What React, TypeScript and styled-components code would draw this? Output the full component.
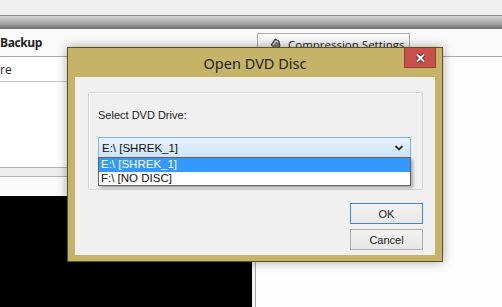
import styled, { createGlobalStyle } from "styled-components";

const drives = ["E:\\ [SHREK_1]", "F:\\ [NO DISC]"];

const App = () => {
  return (
    <Page>
      <GlobalStyle />
      <TopStrip />
      <Band />
      <Header>
        <HeaderTitleCell>
          <HeaderTitle>Backup</HeaderTitle>
        </HeaderTitleCell>
        <ToolButton>
          <svg width="15" height="14" viewBox="0 0 15 14">
            <path d="M3 8 L7 2 L11 4 L12 9 L8 12 Z" fill="#7d7d7d" stroke="#3c3c3c" strokeWidth="1" />
            <path d="M5 8 L8 4 L10 5" fill="none" stroke="#d8d8d8" strokeWidth="1.2" />
          </svg>
          Compression Settings
        </ToolButton>
      </Header>
      <Body>
        <LeftPane>
          <Row>re</Row>
          <Spacer />
          <SplitBar />
          <Gap />
          <Preview />
        </LeftPane>
        <Divider />
        <RightPane />
      </Body>

      <Dialog>
        <TitleBar>
          <Title>Open DVD Disc</Title>
          <CloseButton>
            <svg width="11" height="10" viewBox="0 0 11 10">
              <path d="M2 1.5 L9 8.5 M9 1.5 L2 8.5" stroke="#4a2020" strokeWidth="3.6" />
              <path d="M2 1.5 L9 8.5 M9 1.5 L2 8.5" stroke="#ffffff" strokeWidth="2" />
            </svg>
          </CloseButton>
        </TitleBar>
        <Client>
          <GroupBox>
            <Label>Select DVD Drive:</Label>
            <ComboWrap>
              <Combo>
                <span>{drives[0]}</span>
                <svg width="10" height="6" viewBox="0 0 10 6">
                  <path d="M1.5 1 L5 4.5 L8.5 1" fill="none" stroke="#333" strokeWidth="1.8" />
                </svg>
              </Combo>
              <DropList>
                {drives.map((d, i) => (
                  <Option key={d} $selected={i === 0}>
                    {d}
                  </Option>
                ))}
              </DropList>
            </ComboWrap>
          </GroupBox>
          <ButtonColumn>
            <DialogButton $primary>OK</DialogButton>
            <DialogButton>Cancel</DialogButton>
          </ButtonColumn>
        </Client>
      </Dialog>
    </Page>
  );
};

const GlobalStyle = createGlobalStyle`
  html, body {
    margin: 0;
    padding: 0;
  }
  body {
    width: 502px;
    height: 307px;
    overflow: hidden;
    background: #f0f0f0;
    font-family: "Liberation Sans", Arial, sans-serif;
  }
`;

const Page = styled.div`
  position: relative;
  width: 502px;
  height: 307px;
  display: flex;
  flex-direction: column;
  overflow: hidden;
`;

const TopStrip = styled.div`
  height: 15px;
  background: #efefef;
  border-bottom: 1px solid #8f8f8f;
`;

const Band = styled.div`
  height: 13px;
  background: linear-gradient(#d6d6d6, #a2a2a2 60%, #6c6c6c);
`;

const Header = styled.div`
  height: 27px;
  display: flex;
  background: #fafafa;
  border-bottom: 1px solid #a8a8a8;
`;

const HeaderTitleCell = styled.div`
  width: 257px;
  display: flex;
  align-items: center;
`;

const HeaderTitle = styled.span`
  font-family: "Open Sans", sans-serif;
  font-weight: 700;
  font-size: 12px;
  letter-spacing: -0.4px;
  color: #1e1e1e;
`;

const ToolButton = styled.div`
  margin-top: 4px;
  width: 153px;
  height: 22px;
  box-sizing: border-box;
  display: flex;
  align-items: center;
  gap: 5px;
  padding-left: 10px;
  border: 1px solid #acacac;
  background: linear-gradient(#fbfbfb, #ececec);
  font-family: "Open Sans", sans-serif;
  font-size: 11.5px;
  color: #222;
`;

const Body = styled.div`
  flex: 1;
  display: flex;
`;

const LeftPane = styled.div`
  width: 252px;
  display: flex;
  flex-direction: column;
  background: #ffffff;
`;

const Row = styled.div`
  height: 24px;
  display: flex;
  align-items: center;
  border-bottom: 1px solid #c4c4c4;
  font-family: "Open Sans", sans-serif;
  font-size: 12px;
  color: #222;
`;

const Spacer = styled.div`
  height: 85px;
`;

const SplitBar = styled.div`
  height: 8px;
  background: #eeeeee;
  border-top: 1px solid #b2b2b2;
  border-bottom: 1px solid #b2b2b2;
`;

const Gap = styled.div`
  height: 19px;
  background: #fbfbfb;
`;

const Preview = styled.div`
  flex: 1;
  background: #000;
`;

const Divider = styled.div`
  width: 3px;
  background: #f3f3f3;
  border-right: 1px solid #a9a9a9;
`;

const RightPane = styled.div`
  flex: 1;
  background: #fdfdfd;
`;

const Dialog = styled.div`
  position: absolute;
  left: 67px;
  top: 47px;
  width: 376px;
  height: 215px;
  box-sizing: border-box;
  display: flex;
  flex-direction: column;
  border: 1px solid #5c5020;
  background: #c5b367;
  box-shadow: 0 0 10px rgba(0, 0, 0, 0.35);
`;

const TitleBar = styled.div`
  position: relative;
  height: 29px;
  display: flex;
  align-items: center;
  justify-content: center;
`;

const Title = styled.span`
  font-family: "Noto Sans", "Open Sans", sans-serif;
  font-size: 14.5px;
  color: #1f1f1f;
`;

const CloseButton = styled.div`
  position: absolute;
  top: 0;
  right: 6px;
  width: 32px;
  height: 20px;
  box-sizing: border-box;
  display: flex;
  align-items: center;
  justify-content: center;
  background: #c8504b;
  border: 1px solid #9a3d36;
  border-top: none;
`;

const Client = styled.div`
  flex: 1;
  margin: 0 7px 6px;
  padding: 15px 12px 5px 13px;
  display: flex;
  flex-direction: column;
  background: #f0f0f0;
  border: 1px solid #e4dcc0;
  border-width: 0;
`;

const GroupBox = styled.div`
  height: 98px;
  box-sizing: border-box;
  padding: 0 11px 0 9px;
  border: 1px solid #d6d6d6;
  border-radius: 2px;
  box-shadow: inset 1px 1px 0 #ffffff;
`;

const Label = styled.div`
  margin-top: 15px;
  line-height: 14px;
  font-size: 11px;
  color: #1a1a1a;
`;

const ComboWrap = styled.div`
  position: relative;
  margin-top: 15px;
`;

const Combo = styled.div`
  height: 21px;
  box-sizing: border-box;
  display: flex;
  align-items: center;
  justify-content: space-between;
  padding: 0 6px 0 3px;
  border: 1px solid #7eb4ea;
  background: linear-gradient(#ecf4fc, #d8eaf9 50%, #cfe5f8);
  font-size: 11.5px;
  color: #111;
`;

const DropList = styled.div`
  position: absolute;
  top: 20px;
  left: 0;
  width: 313px;
  box-sizing: border-box;
  border: 1px solid #646464;
  background: #ffffff;
  box-shadow: 2px 2px 3px rgba(0, 0, 0, 0.3);
`;

const Option = styled.div<{ $selected?: boolean }>`
  height: ${(p) => (p.$selected ? 14 : 13)}px;
  line-height: 13px;
  padding-left: 2px;
  font-size: 11.5px;
  background: ${(p) => (p.$selected ? "#3399ff" : "#ffffff")};
  color: ${(p) => (p.$selected ? "#ffffff" : "#111")};
`;

const ButtonColumn = styled.div`
  margin-top: 13px;
  align-self: flex-end;
  display: flex;
  flex-direction: column;
  gap: 5px;
`;

const DialogButton = styled.div<{ $primary?: boolean }>`
  width: 73px;
  height: 21px;
  box-sizing: border-box;
  display: flex;
  align-items: center;
  justify-content: center;
  border: 1px solid ${(p) => (p.$primary ? "#3c8ad8" : "#adadad")};
  background: linear-gradient(#f2f2f2, #e6e6e6);
  font-size: 11px;
  color: #1a1a1a;
`;

export default App;
